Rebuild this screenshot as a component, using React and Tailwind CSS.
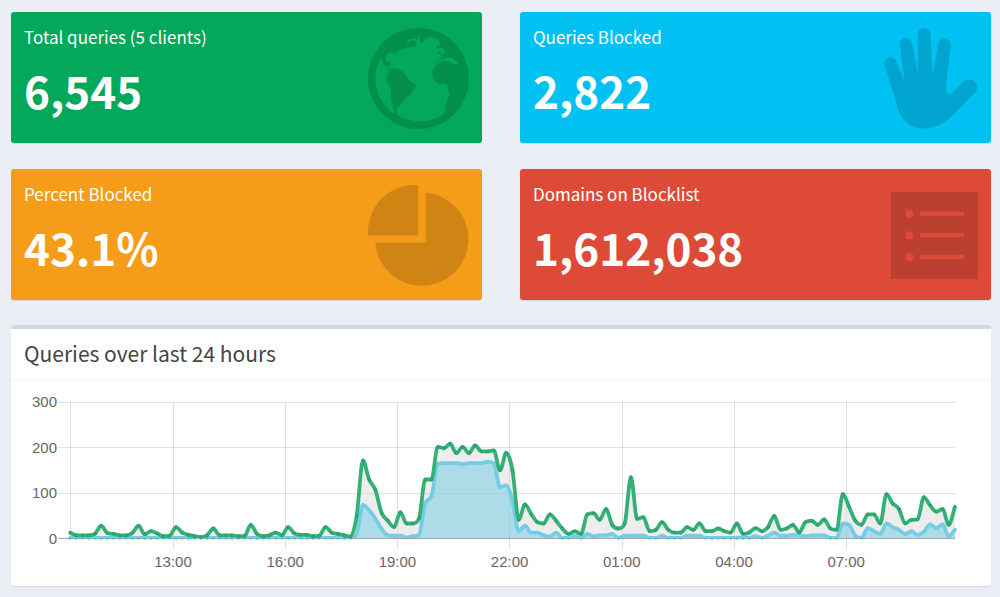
const total = [
  12, 6, 6, 6, 9, 27, 11, 9, 6, 6, 11, 27, 8, 15, 10, 4, 5, 24, 12, 7, 4, 2, 6, 21,
  6, 6, 6, 4, 4, 29, 9, 4, 6, 12, 6, 24, 10, 7, 7, 4, 5, 24, 12, 9, 6, 3, 49, 171,
  129, 106, 55, 38, 24, 57, 32, 32, 43, 129, 129, 201, 198, 208, 187, 201, 187, 204,
  191, 191, 193, 149, 188, 149, 40, 74, 53, 35, 32, 52, 38, 21, 9, 15, 9, 52, 55, 40,
  64, 29, 21, 32, 134, 42, 46, 15, 18, 35, 18, 12, 12, 24, 18, 32, 15, 15, 21, 15,
  12, 32, 9, 12, 22, 15, 24, 49, 18, 21, 29, 12, 35, 38, 29, 41, 21, 18, 97, 69, 38,
  29, 52, 52, 32, 97, 76, 64, 32, 40, 41, 90, 72, 58, 64, 29, 69,
];

const blocked = [
  ...Array(46).fill(0),
  9, 73, 61, 43, 20, 6, 5, 5, 1, 4, 7, 77, 92, 164, 165, 165, 165, 163, 165, 165, 165,
  168, 165, 112, 116, 81, 15, 27, 12, 12, 6, 3, 12, 0, 0, 5, 0, 9, 4, 6, 6, 9, 0, 5,
  5, 5, 5, 0, 0, 5, 0, 0, 0, 5, 5, 5, 0, 0, 0, 0, 0, 0, 0, 0, 4, 0, 5, 12, 5, 5, 7,
  6, 4, 6, 6, 6, 0, 0, 32, 29, 5, 0, 22, 15, 9, 32, 24, 18, 9, 15, 7, 14, 30, 22, 30,
  4, 18,
];

const LEFT = 46;
const RIGHT = 931;
const TOP = 10;
const BOTTOM = 146;
const STEP = (RIGHT - LEFT) / (total.length - 1);

const toPoints = (values) =>
  values.map((v, i) => [LEFT + i * STEP, BOTTOM - (v / 300) * (BOTTOM - TOP)]);

// monotone cubic interpolation, so the curve never dips below a data point
function curve(points) {
  const n = points.length;
  const slopes = [];
  for (let i = 0; i < n - 1; i++) {
    slopes.push((points[i + 1][1] - points[i][1]) / STEP);
  }
  const tangents = points.map((_, i) => {
    if (i === 0) return slopes[0];
    if (i === n - 1) return slopes[n - 2];
    if (slopes[i - 1] * slopes[i] <= 0) return 0;
    return (slopes[i - 1] + slopes[i]) / 2;
  });
  for (let i = 0; i < n - 1; i++) {
    if (slopes[i] === 0) {
      tangents[i] = 0;
      tangents[i + 1] = 0;
      continue;
    }
    const a = tangents[i] / slopes[i];
    const b = tangents[i + 1] / slopes[i];
    const s = a * a + b * b;
    if (s > 9) {
      const t = 3 / Math.sqrt(s);
      tangents[i] = t * a * slopes[i];
      tangents[i + 1] = t * b * slopes[i];
    }
  }
  let d = `M${points[0][0]} ${points[0][1]}`;
  for (let i = 0; i < n - 1; i++) {
    const [x0, y0] = points[i];
    const [x1, y1] = points[i + 1];
    const h = STEP / 3;
    d += `C${x0 + h} ${y0 + tangents[i] * h} ${x1 - h} ${y1 - tangents[i + 1] * h} ${x1} ${y1}`;
  }
  return d;
}

function Area({ values, fill }) {
  return <path d={`${curve(toPoints(values))}V${BOTTOM}H${LEFT}Z`} fill={fill} />;
}

function Line({ values, color }) {
  return (
    <path
      d={curve(toPoints(values))}
      fill="none"
      stroke={color}
      strokeWidth="3.8"
      strokeLinejoin="round"
      clipPath="url(#chart-area)"
    />
  );
}

function Dots({ values, fill, stroke }) {
  return toPoints(values).map(([x, y], i) => (
    <circle key={i} cx={x} cy={y} r="1.2" fill={fill} stroke={stroke} />
  ));
}

function QueriesChart() {
  const hours = ["13:00", "16:00", "19:00", "22:00", "01:00", "04:00", "07:00"];
  return (
    <svg viewBox="0 0 954 180" className="block w-full" role="img" aria-label="Queries over last 24 hours">
      <defs>
        <clipPath id="chart-area">
          <rect x={LEFT - 2} y={TOP} width={RIGHT - LEFT + 4} height={BOTTOM - TOP} />
        </clipPath>
      </defs>

      <g stroke="#000" strokeOpacity="0.12">
        {[10.5, 55.5, 101.5].map((y) => (
          <line key={y} x1="34" x2={RIGHT} y1={y} y2={y} />
        ))}
        <line x1={LEFT + 0.5} x2={LEFT + 0.5} y1={TOP} y2={BOTTOM} />
        {hours.map((h, i) => {
          const x = Math.floor(149.3 + i * 112.2) + 0.5;
          return <line key={h} x1={x} x2={x} y1={TOP} y2={BOTTOM + 12} />;
        })}
      </g>
      <line x1="34" x2={RIGHT} y1="146.5" y2="146.5" stroke="#000" strokeOpacity="0.35" />

      <Area values={total} fill="rgba(210,210,210,0.4)" />
      <Area values={blocked} fill="rgba(111,201,227,0.5)" />
      <Dots values={blocked} fill="#2fc0e8" stroke="#2fc0e8" />
      <Line values={blocked} color="#74cce5" />
      <Line values={total} color="#35b177" />
      <Dots values={total} fill="#5cb98c" stroke="#139a5b" />

      <g fill="#666" fontSize="15" className="font-['Liberation_Sans',Arial,sans-serif]">
        {[300, 200, 100, 0].map((v, i) => (
          <text key={v} x="33" y={15 + i * 45.5} textAnchor="end">{v}</text>
        ))}
        {hours.map((h, i) => (
          <text key={h} x={149 + i * 112.2} y="175" textAnchor="middle">{h}</text>
        ))}
      </g>
    </svg>
  );
}

function EarthIcon() {
  return (
    <svg viewBox="53 86 304 304" className="size-[101px]" fill="currentColor" aria-hidden="true">
      <path
        fillRule="evenodd"
        d="M205 86A152 152 0 1 1 205 390A152 152 0 1 1 205 86Z
          M92 178C80 198 75 218 75 240C76 282 97 321 131 343C130 331 127 322 124 306C121 292 124 278 121 265C117 255 108 251 108 238C108 228 113 220 119 214C117 209 114 206 109 202C101 198 98 189 92 178Z
          M139 345C143 334 138 329 145 321C151 317 151 308 159 304C166 300 166 293 174 291C187 288 184 276 193 268C199 262 199 257 192 253C186 250 184 246 178 244C172 243 174 237 169 231C164 224 160 218 153 215C146 211 139 206 131 208C126 209 122 207 119 211C118 204 111 201 113 200C121 202 122 197 121 192C119 188 113 190 108 185C103 178 106 167 114 162C120 158 128 161 133 165C135 163 136 157 143 155C151 150 159 150 168 147C177 143 188 143 195 142C198 138 198 130 194 125C188 119 181 127 177 131C173 133 168 130 171 125C178 117 190 117 201 119C205 116 201 110 205 108C211 110 207 118 209 124C209 132 215 136 219 130C223 124 220 120 228 116C231 113 236 116 240 112C245 115 249 113 252 117C257 119 265 118 267 123C271 126 265 130 268 134C271 137 267 140 262 139C257 143 258 149 263 148C268 145 274 141 279 148C286 154 286 161 280 164C277 167 274 165 272 160C269 154 261 154 262 160C263 166 272 164 274 170C273 177 269 180 267 183C276 181 282 175 290 177C299 177 302 173 307 176C313 183 320 186 326 195C316 196 307 194 301 188C291 185 280 184 270 190C262 194 253 199 250 208C245 216 247 221 247 232C248 240 255 247 263 252C272 257 285 251 291 257C294 264 292 271 297 279C299 290 294 298 289 309C283 320 289 330 283 341C270 357 239 367 205 367C179 366 156 359 139 345Z"
      />
    </svg>
  );
}

function HandIcon() {
  return (
    <svg viewBox="72 86 284 304" className="h-[101px] w-[94px]" fill="currentColor" aria-hidden="true">
      <path d="M113 325L75 202C70 188 78 175 90 174C100 173 107 180 110 188L134 246L120 138C118 126 126 117 137 116C148 116 155 123 157 132L175 226L174 106C174 94 182 86 194 86C205 86 212 94 213 105L219 230L236 132C238 122 247 116 257 117C268 118 275 127 274 138L259 265C259 275 262 284 269 284C275 284 279 280 284 275L312 248C321 239 335 238 345 247C355 257 357 269 349 279L279 350C252 376 225 389 193 389C153 389 125 368 113 325Z" />
    </svg>
  );
}

function PieIcon() {
  return (
    <svg viewBox="53 75 304 304" className="size-[101px]" fill="currentColor" aria-hidden="true">
      <path d="M204 75V227H53V215A140 140 0 0 1 193 75Z" />
      <path d="M227 98A140.500 140.500 0 1 1 75 249H227Z" />
    </svg>
  );
}

function ListIcon() {
  return (
    <svg viewBox="93 97 261 261" className="size-[87px]" fill="currentColor" aria-hidden="true">
      <path
        fillRule="evenodd"
        d="M93 97H354V358H93Z
          M136 162a12 12 0 1 0 24 0a12 12 0 1 0 -24 0Z
          M136 227a12 12 0 1 0 24 0a12 12 0 1 0 -24 0Z
          M136 292a12 12 0 1 0 24 0a12 12 0 1 0 -24 0Z
          M180 156H312V168H180ZM180 221H312V233H180ZM180 286H312V298H180Z"
      />
    </svg>
  );
}

const stats = [
  { label: "Total queries (5 clients)", value: "6,545", color: "bg-[#03a85a]", Icon: EarthIcon },
  { label: "Queries Blocked", value: "2,822", color: "bg-[#00c1f2]", Icon: HandIcon },
  { label: "Percent Blocked", value: "43.1%", color: "bg-[#f59c18]", Icon: PieIcon },
  { label: "Domains on Blocklist", value: "1,612,038", color: "bg-[#dd4b38]", Icon: ListIcon },
];

export default function App() {
  return (
    <main className="min-h-screen bg-[#ebeef4] pt-3 pr-[9px] pb-[10px] pl-[11px] font-['Noto_Sans_CJK_SC','Source_Sans_Pro',sans-serif]">
      <div className="grid grid-cols-2 gap-x-[38px] gap-y-[26px]">
        {stats.map(({ label, value, color, Icon }) => (
          <section
            key={label}
            className={`flex items-start justify-between rounded-[3px] px-[13px] pt-4 pb-[14px] shadow-[0_1px_1px_rgba(0,0,0,0.1)] ${color}`}
          >
            <div className="text-white">
              <p className="text-[17px] leading-[18px]">{label}</p>
              <p className="mt-4 text-[44px] leading-[56px] font-bold">{value}</p>
            </div>
            <div className="flex h-[101px] items-center text-black/15">
              <Icon />
            </div>
          </section>
        ))}
      </div>

      <section className="mt-[25px] rounded-[4px] border-t-4 border-[#d2d6e0] bg-white shadow-[0_1px_1px_rgba(0,0,0,0.1)]">
        <header className="border-b border-[#f4f4f4] px-[13px] pt-[10px] pb-[13px]">
          <h2 className="text-[21px] leading-7 text-[#444]">Queries over last 24 hours</h2>
        </header>
        <div className="px-[13px] pt-[11px] pb-[14px]">
          <QueriesChart />
        </div>
      </section>
    </main>
  );
}
